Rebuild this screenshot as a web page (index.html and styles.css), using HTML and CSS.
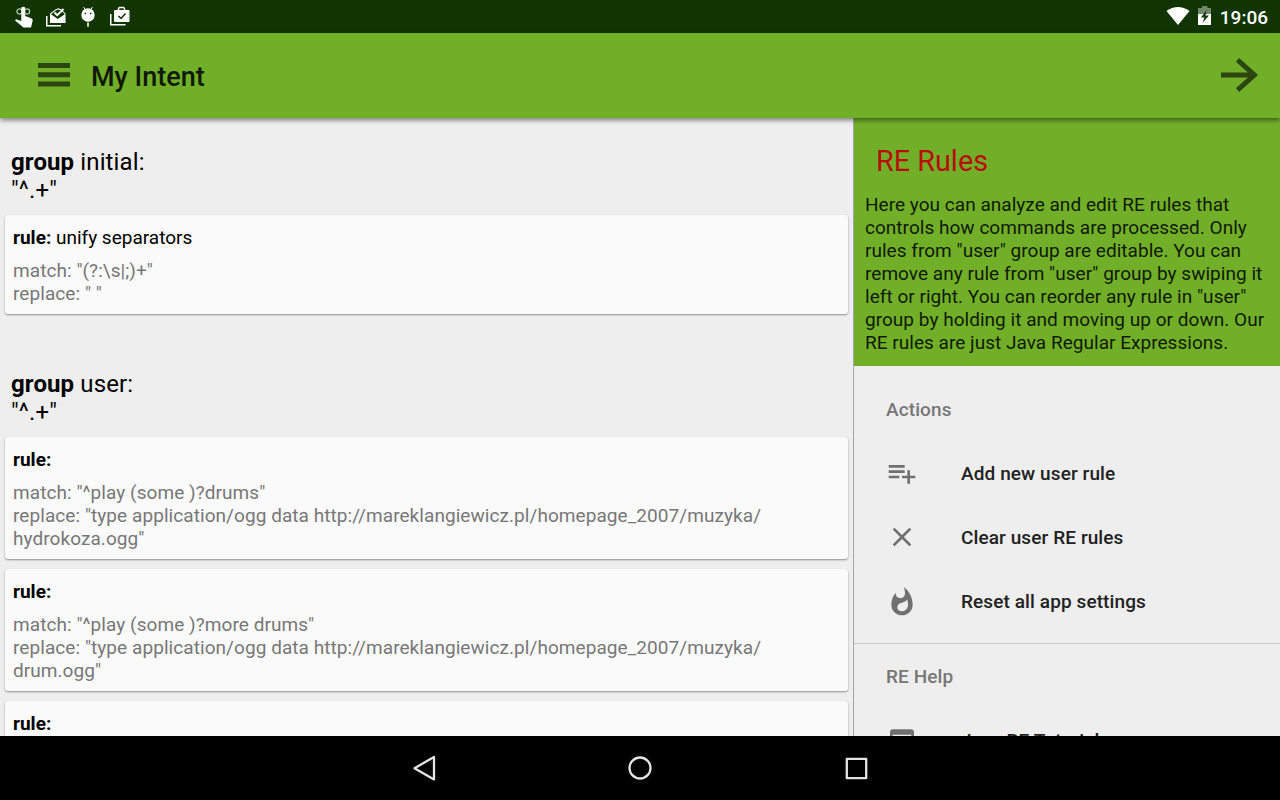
FILE: index.html
```html
<!DOCTYPE html>
<html lang="en">
<head>
<meta charset="utf-8">
<title>My Intent</title>
<link rel="stylesheet" href="styles.css">
</head>
<body>
<div class="device">
  <div class="status-bar">
    <div class="notifications">
      <svg class="status-icon" viewBox="0 0 20 22"><g fill="none" stroke="#b4c6af" stroke-width="1.300"><circle cx="4.500" cy="5.500" r="2.600"/><circle cx="12" cy="5.500" r="2.600"/></g><path fill="#fff" d="M6.300 1.500q1.900-1.500 3.900 0V10l6 2.300q1.700.700 1.500 2.200L16 21.500H8.500L0 14.500 1 13.200 6.300 15z"/></svg>
      <svg class="status-icon" viewBox="0 0 20 22"><path fill="none" stroke="#fff" stroke-width="1.500" d="M-.25 10v9.750H14"/><path fill="#fff" d="M3 7.500L8.500 3.500 11 2.200l3 1 4.500 4.300V17H3z"/><path fill="#103500" d="M4 8.300L8.500 4.700l2-1.200 3.500.7 3.800 4.100-7.100 4.700z"/><path fill="none" stroke="#fff" stroke-width="1.800" d="M7.500 6.500l2.700 2.700L16.500 3"/></svg>
      <svg class="status-icon" viewBox="0 0 20 22"><path stroke="#fff" stroke-width="1" d="M5.500 1l2 3M14.500 1l-2 3"/><circle cx="10" cy="9" r="6.700" fill="#fff"/><path fill="#103500" d="M6.500 6.700H8v1.500H6.500zm5.500 0h1.500v1.500H12z"/><path stroke="#fff" stroke-width="1.600" d="M10 16.500v4.300"/></svg>
      <svg class="status-icon" viewBox="0 0 20 22"><path fill="none" stroke="#fff" stroke-width="1.500" d="M.75 8v10.750H15.500"/><path fill="none" stroke="#fff" stroke-width="1.500" d="M8.500 5V2.500l1-1h4l1 1V5"/><rect x="4" y="4" width="15.500" height="12" rx="1" fill="#fff"/><path fill="none" stroke="#103500" stroke-width="1.500" d="M8.500 10l2.500 2.400L15.500 7.500"/></svg>
    </div>
    <div class="system">
      <svg class="wifi" viewBox="0 0 24 20"><path fill="#fff" d="M.5 5Q12-3 23.500 5L12 19z"/></svg>
      <svg class="battery" viewBox="0 0 14 20"><path fill="#70886a" d="M0 2h4V0h5.500v2H13v6H0z"/><path fill="#fff" d="M0 8h13v11H0z"/><path fill="#103500" d="M8.500 4L3 11.500h3.500L4.500 17l6.500-7.500H7.500z"/></svg>
      <span class="clock">19:06</span>
    </div>
  </div>
  <header class="toolbar">
    <svg class="menu-icon" viewBox="0 0 32 24"><path fill="#2d450f" d="M0 0h32v5H0zm0 9.300h32v5H0zm0 9.200h32v5H0z"/></svg>
    <h1 class="title">My Intent</h1>
    <svg class="forward-icon" viewBox="0 0 38 34"><path fill="none" stroke="#2d450f" stroke-width="5" d="M0 17h33M16.500 1.800L33.400 17 16.500 32.200"/></svg>
  </header>
  <div class="content">
    <main class="rules">
      <section class="group">
        <h2 class="group-title"><b>group</b> initial:<br>"^.+"</h2>
        <article class="card"><h3 class="rule-name"><b>rule:</b> unify separators</h3><p class="rule-body">match: "(?:\s|;)+"<br>replace: " "</p></article>
      </section>
      <section class="group">
        <h2 class="group-title"><b>group</b> user:<br>"^.+"</h2>
        <article class="card"><h3 class="rule-name"><b>rule:</b></h3><p class="rule-body">match: "^play (some )?drums"<br>replace: "type application/ogg data http://mareklangiewicz.pl/homepage_2007/muzyka/<br>hydrokoza.ogg"</p></article>
        <article class="card"><h3 class="rule-name"><b>rule:</b></h3><p class="rule-body">match: "^play (some )?more drums"<br>replace: "type application/ogg data http://mareklangiewicz.pl/homepage_2007/muzyka/<br>drum.ogg"</p></article>
        <article class="card"><h3 class="rule-name"><b>rule:</b></h3></article>
      </section>
    </main>
    <aside class="side">
      <div class="intro">
        <h2 class="intro-title">RE Rules</h2>
        <p class="intro-text">Here you can analyze and edit RE rules that<br>controls how commands are processed. Only<br>rules from "user" group are editable. You can<br>remove any rule from "user" group by swiping it<br>left or right. You can reorder any rule in "user"<br>group by holding it and moving up or down. Our<br>RE rules are just Java Regular Expressions.</p>
      </div>
      <nav class="menu">
        <div class="menu-head">Actions</div>
        <div class="menu-item"><svg class="item-icon" viewBox="0 0 24 24"><path d="M14 10H2v2h12v-2zm0-4H2v2h12V6zm4 8v-4h-2v4h-4v2h4v4h2v-4h4v-2h-4zM2 16h8v-2H2v2z"/></svg><span>Add new user rule</span></div>
        <div class="menu-item"><svg class="item-icon" viewBox="0 0 24 24"><path d="M19 6.410L17.590 5 12 10.590 6.410 5 5 6.410 10.590 12 5 17.590 6.410 19 12 13.410 17.590 19 19 17.590 13.410 12z"/></svg><span>Clear user RE rules</span></div>
        <div class="menu-item"><svg class="item-icon flame" viewBox="0 0 24 24"><path d="M13.500.67s.74 2.650.74 4.800c0 2.060-1.350 3.730-3.410 3.730-2.070 0-3.630-1.670-3.630-3.730l.03-.36C5.210 7.510 4 10.620 4 14c0 4.420 3.580 8 8 8s8-3.580 8-8C20 8.610 17.410 3.800 13.500.67zM11.710 19c-1.780 0-3.220-1.400-3.220-3.140 0-1.620 1.050-2.760 2.810-3.120 1.770-.36 3.600-1.210 4.620-2.580.39 1.290.59 2.650.59 4.040 0 2.650-2.150 4.800-4.800 4.800z"/></svg><span>Reset all app settings</span></div>
        <div class="menu-head second">RE Help</div>
        <div class="menu-item"><svg class="item-icon" viewBox="0 0 24 24"><path d="M19 4H5c-1.110 0-2 .9-2 2v12c0 1.100.89 2 2 2h14c1.100 0 2-.9 2-2V6c0-1.100-.89-2-2-2zm0 14H5V8h14v10z"/></svg><span>Java RE Tutorial</span></div>
      </nav>
    </aside>
  </div>
  <footer class="nav-bar">
    <svg class="nav-icon" viewBox="0 0 32 32"><path d="M26 5L6.500 16.200 26 27.400z"/></svg>
    <svg class="nav-icon" viewBox="0 0 32 32"><circle cx="16" cy="16" r="10.500"/></svg>
    <svg class="nav-icon" viewBox="0 0 32 32"><path d="M6.800 6.800h19.400v19.400H6.800z"/></svg>
  </footer>
</div>
</body>
</html>
```

FILE: styles.css
```css
* { box-sizing: border-box; }
body, h1, h2, h3, p { margin: 0; font-weight: 400; }
body { font-family: Roboto, sans-serif; color: #000; }
svg { display: block; flex: none; overflow: visible; }
.device { display: flex; flex-direction: column; width: 1280px; height: 800px; overflow: hidden; background: #eee; }

.status-bar { display: flex; flex: none; justify-content: space-between; height: 33px; padding: 6px 12px 0 15px; background: #103500; }
.notifications { display: flex; gap: 12px; margin-right: auto; }
.status-icon { width: 20px; height: 22px; }
.status-icon + .status-icon { margin-left: -.3px; }
.system { display: flex; color: #fff; }
.wifi { width: 24px; height: 20px; margin-right: 8px; }
.battery { width: 14px; height: 20px; margin-right: 8px; }
.clock { font-size: 19px; font-weight: 500; line-height: 23px; }

.toolbar { display: flex; flex: none; align-items: center; height: 85px; padding: 0 21px 2px 38px; background: #72af29; box-shadow: 0 2px 5px rgba(0, 0, 0, .5); z-index: 2; }
.menu-icon { width: 32px; height: 24px; }
.title { margin: 4px auto 0 21px; font-size: 27px; font-weight: 500; color: #101904; }
.forward-icon { width: 38px; height: 34px; }

.content { display: flex; flex: none; height: 618px; overflow: hidden; }
.rules { width: 853px; padding: 31px 5px 0; }
.group { display: flex; flex-direction: column; gap: 10px; margin-bottom: 57px; }
.group-title { margin-bottom: 1px; padding-left: 6px; font-size: 24px; line-height: 27.500px; letter-spacing: .12px; }
.card { height: 122px; padding: 11px 8px; border-radius: 3px; background: #fafafa; box-shadow: 0 1px 2px rgba(0, 0, 0, .4); }
.group:first-child .card { height: 99px; }
.rule-name { font-size: 19px; line-height: 23px; }
.rule-body { margin-top: 10px; font-size: 19px; line-height: 23px; letter-spacing: .065px; color: #777; white-space: nowrap; }
b { font-weight: 700; }

.side { width: 427px; border-left: 1px solid #a5a5a5; }
.intro { height: 248px; padding: 26px 11px 0; background: #72af29; }
.intro-title { padding-left: 11px; font-size: 28.800px; line-height: 35px; color: #b90d0a; }
.intro-text { margin-top: 14px; font-size: 19px; line-height: 23px; letter-spacing: .03px; color: #101904; white-space: nowrap; }
.menu { padding-top: 11px; }
.menu-head { height: 64px; padding: 1px 0 0 32px; font-size: 19px; font-weight: 500; line-height: 64px; letter-spacing: .1px; color: #777; }
.second { height: 65px; margin-top: 10px; border-top: 1px solid #ccc; }
.menu-item { display: flex; align-items: center; height: 64px; padding-left: 32px; font-size: 19px; font-weight: 500; letter-spacing: .1px; color: #212121; }
.item-icon { width: 32px; height: 32px; margin-right: 43px; fill: #707070; }
.flame { margin-top: 2px; }

.nav-bar { display: flex; flex: none; justify-content: center; gap: 184px; height: 64px; padding-top: 16px; background: #000; z-index: 3; }
.nav-icon { width: 32px; height: 32px; fill: none; stroke: #e3e3e3; stroke-width: 2.300; stroke-linejoin: round; }
```
